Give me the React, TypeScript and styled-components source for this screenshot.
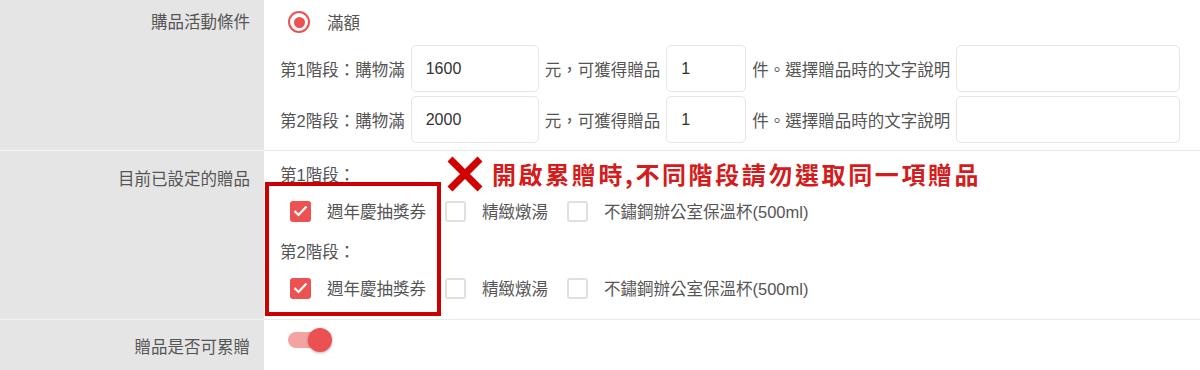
import React from 'react';
import styled, { createGlobalStyle } from 'styled-components';

const GlobalStyle = createGlobalStyle`
  html, body {
    margin: 0;
    padding: 0;
    background: #ffffff;
  }
  body {
    font-family: "Liberation Sans", "Noto Sans CJK TC", sans-serif;
    font-size: 16.5px;
    color: #555555;
  }
`;

const Form = styled.div`
  width: 1200px;
  display: flex;
  flex-direction: column;
`;

const Row = styled.div<{ $minHeight?: number }>`
  display: grid;
  grid-template-columns: 264px 1fr;
  min-height: ${(p) => (p.$minHeight ? `${p.$minHeight}px` : 'auto')};
`;

const Label = styled.div<{ $top: number; $last?: boolean }>`
  background: #e5e5e5;
  text-align: right;
  padding: ${(p) => p.$top}px 14px 0 0;
  line-height: 24px;
  color: #555;
  border-bottom: ${(p) => (p.$last ? 'none' : '1px solid #f2f2f2')};
`;

const Content = styled.div<{ $top: number; $bottom: number; $last?: boolean }>`
  position: relative;
  padding: ${(p) => p.$top}px 16px ${(p) => p.$bottom}px 16px;
  border-bottom: ${(p) => (p.$last ? 'none' : '1px solid #e9e9e9')};
  display: flex;
  flex-direction: column;
`;

const RadioLine = styled.label`
  display: flex;
  align-items: center;
  gap: 17px;
  height: 24px;
  padding-left: 8px;
`;

const RadioDot = styled.span`
  width: 22px;
  height: 22px;
  box-sizing: border-box;
  border: 2.5px solid #ec5252;
  border-radius: 50%;
  display: flex;
  align-items: center;
  justify-content: center;
  &::after {
    content: '';
    width: 11px;
    height: 11px;
    border-radius: 50%;
    background: #ec5252;
  }
`;

const TierList = styled.div`
  display: flex;
  flex-direction: column;
  gap: 4px;
  margin-top: 11px;
`;

const TierRow = styled.div`
  display: flex;
  align-items: center;
  gap: 6px;
  white-space: nowrap;
`;

const TextInput = styled.input<{ $width: number }>`
  width: ${(p) => p.$width}px;
  height: 47px;
  box-sizing: border-box;
  border: 1.5px solid #e6e6e6;
  border-radius: 5px;
  padding: 0 14px;
  font-family: "Liberation Sans", "Noto Sans CJK TC", sans-serif;
  font-size: 16px;
  color: #333;
  background: #fff;
  outline: none;
`;

const StageTitle = styled.div<{ $gap?: number }>`
  height: 24px;
  line-height: 24px;
  margin-top: ${(p) => p.$gap ?? 0}px;
`;

const CheckRow = styled.div`
  display: flex;
  align-items: center;
  gap: 19px;
  height: 24px;
  margin-top: 12px;
  padding-left: 10px;
`;

const CheckItem = styled.label`
  display: flex;
  align-items: center;
  gap: 16px;
  white-space: nowrap;
`;

const Box = styled.span<{ $checked?: boolean }>`
  width: 21px;
  height: 21px;
  box-sizing: border-box;
  border-radius: 3px;
  border: ${(p) => (p.$checked ? 'none' : '2px solid #e0e0e0')};
  background: ${(p) => (p.$checked ? '#ec5252' : '#fff')};
  display: flex;
  align-items: center;
  justify-content: center;
`;

const Highlight = styled.div`
  position: absolute;
  left: 1px;
  top: 31px;
  width: 176px;
  height: 134px;
  box-sizing: border-box;
  border: 4px solid #cc0000;
  pointer-events: none;
`;

const Warning = styled.div`
  position: absolute;
  left: 183px;
  top: 5px;
  display: flex;
  align-items: center;
  gap: 9px;
  height: 36px;
`;

const WarningText = styled.span`
  font-family: "Noto Sans CJK TC", sans-serif;
  font-size: 24px;
  font-weight: 700;
  letter-spacing: 2.6px;
  color: #d41c1c;
  line-height: 36px;
  white-space: nowrap;
`;

const Switch = styled.span`
  position: relative;
  display: block;
  width: 44px;
  height: 24px;
  margin-left: 8px;
`;

const Track = styled.span`
  position: absolute;
  left: 0;
  top: 4px;
  width: 36px;
  height: 16px;
  border-radius: 8px;
  background: #f5a3a2;
`;

const Knob = styled.span`
  position: absolute;
  right: 0;
  top: 0;
  width: 24px;
  height: 24px;
  border-radius: 50%;
  background: #ec5050;
  box-shadow: 0 1px 3px rgba(0, 0, 0, 0.3);
`;

const Check = () => (
  <svg width="15" height="12" viewBox="0 0 15 12">
    <polyline points="1.5,6 5.5,10 13.5,1.5" fill="none" stroke="#fff" strokeWidth="2.2" />
  </svg>
);

const Cross = () => (
  <svg width="36" height="36" viewBox="0 0 36 36">
    <path d="M3 3 L33 33 M33 3 L3 33" stroke="#d10000" strokeWidth="7" fill="none" />
  </svg>
);

const gifts = ['週年慶抽獎券', '精緻燉湯', '不鏽鋼辦公室保溫杯(500ml)'];

const tiers = [
  { stage: 1, amount: '1600', qty: '1' },
  { stage: 2, amount: '2000', qty: '1' },
];

const GiftRow = () => (
  <CheckRow>
    {gifts.map((g, i) => (
      <CheckItem key={g}>
        <Box $checked={i === 0}>{i === 0 && <Check />}</Box>
        {g}
      </CheckItem>
    ))}
  </CheckRow>
);

const App: React.FC = () => {
  return (
    <>
      <GlobalStyle />
      <Form>
        <Row>
          <Label $top={10}>購品活動條件</Label>
          <Content $top={10} $bottom={7}>
            <RadioLine>
              <RadioDot />
              滿額
            </RadioLine>
            <TierList>
              {tiers.map((t) => (
                <TierRow key={t.stage}>
                  第{t.stage}階段：購物滿
                  <TextInput $width={128} defaultValue={t.amount} />
                  元，可獲得贈品
                  <TextInput $width={80} defaultValue={t.qty} />
                  件。選擇贈品時的文字說明
                  <TextInput $width={224} defaultValue="" />
                </TierRow>
              ))}
            </TierList>
          </Content>
        </Row>

        <Row>
          <Label $top={16}>目前已設定的贈品</Label>
          <Content $top={12} $bottom={19}>
            <StageTitle>第1階段：</StageTitle>
            <GiftRow />
            <StageTitle $gap={17}>第2階段：</StageTitle>
            <GiftRow />
            <Highlight />
            <Warning>
              <Cross />
              <WarningText>開啟累贈時,不同階段請勿選取同一項贈品</WarningText>
            </Warning>
          </Content>
        </Row>

        <Row $minHeight={50}>
          <Label $top={15} $last>贈品是否可累贈</Label>
          <Content $top={8} $bottom={0} $last>
            <Switch>
              <Track />
              <Knob />
            </Switch>
          </Content>
        </Row>
      </Form>
    </>
  );
};

export default App;
